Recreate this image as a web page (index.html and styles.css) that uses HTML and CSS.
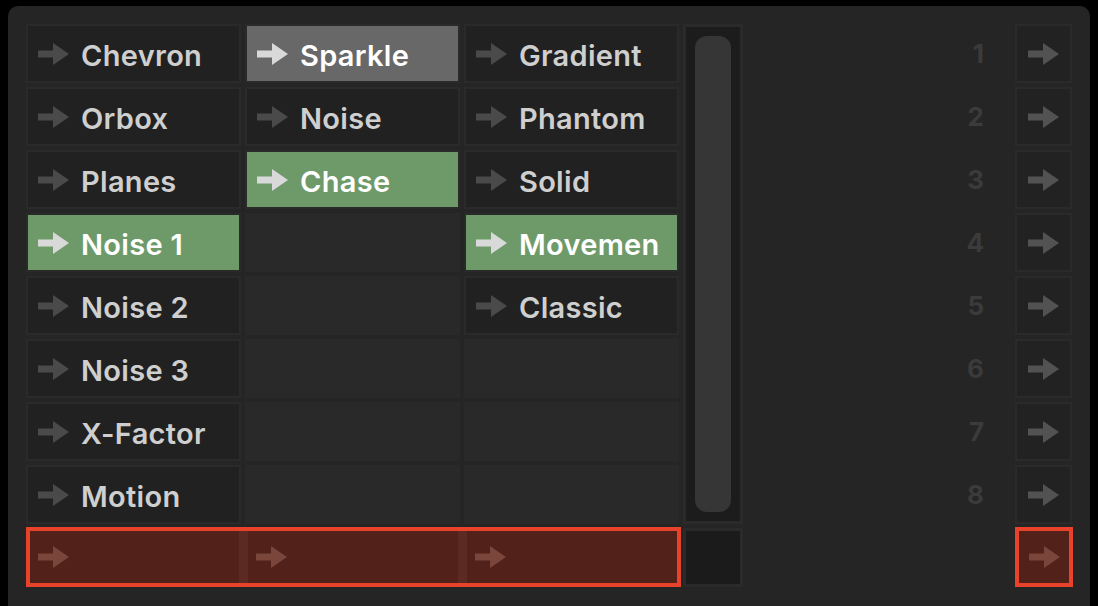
FILE: index.html
```html
<!DOCTYPE html>
<html lang="en">

<head>
  <meta charset="UTF-8">
  <meta name="viewport" content="width=device-width, initial-scale=1.0">
  <title>Clip Launcher</title>
  <link rel="stylesheet" href="styles.css">
</head>

<body>
  <svg width="0" height="0" style="position:absolute">
    <symbol id="arrow" viewBox="0 0 31 22">
      <path d="M0 7.5h15V0l16 11-16 11v-7.5H0z" fill="currentColor" />
    </symbol>
  </svg>

  <div class="panel">
    <div class="launcher">
      <!-- scroll track sits in column 4 over the first 8 rows -->
      <div class="scroll"><div class="thumb"></div></div>

      <!-- row 1 -->
      <div class="cell"><svg class="arrow"><use href="#arrow" /></svg><span>Chevron</span></div>
      <div class="cell playing"><svg class="arrow"><use href="#arrow" /></svg><span>Sparkle</span></div>
      <div class="cell"><svg class="arrow"><use href="#arrow" /></svg><span>Gradient</span></div>
      <div class="num">1</div>
      <div class="go"><svg class="arrow"><use href="#arrow" /></svg></div>

      <!-- row 2 -->
      <div class="cell"><svg class="arrow"><use href="#arrow" /></svg><span>Orbox</span></div>
      <div class="cell"><svg class="arrow"><use href="#arrow" /></svg><span>Noise</span></div>
      <div class="cell"><svg class="arrow"><use href="#arrow" /></svg><span>Phantom</span></div>
      <div class="num">2</div>
      <div class="go"><svg class="arrow"><use href="#arrow" /></svg></div>

      <!-- row 3 -->
      <div class="cell"><svg class="arrow"><use href="#arrow" /></svg><span>Planes</span></div>
      <div class="cell active"><svg class="arrow"><use href="#arrow" /></svg><span>Chase</span></div>
      <div class="cell"><svg class="arrow"><use href="#arrow" /></svg><span>Solid</span></div>
      <div class="num">3</div>
      <div class="go"><svg class="arrow"><use href="#arrow" /></svg></div>

      <!-- row 4 -->
      <div class="cell active"><svg class="arrow"><use href="#arrow" /></svg><span>Noise 1</span></div>
      <div class="empty"></div>
      <div class="cell active"><svg class="arrow"><use href="#arrow" /></svg><span>Movemen</span></div>
      <div class="num">4</div>
      <div class="go"><svg class="arrow"><use href="#arrow" /></svg></div>

      <!-- row 5 -->
      <div class="cell"><svg class="arrow"><use href="#arrow" /></svg><span>Noise 2</span></div>
      <div class="empty"></div>
      <div class="cell"><svg class="arrow"><use href="#arrow" /></svg><span>Classic</span></div>
      <div class="num">5</div>
      <div class="go"><svg class="arrow"><use href="#arrow" /></svg></div>

      <!-- row 6 -->
      <div class="cell"><svg class="arrow"><use href="#arrow" /></svg><span>Noise 3</span></div>
      <div class="empty"></div>
      <div class="empty"></div>
      <div class="num">6</div>
      <div class="go"><svg class="arrow"><use href="#arrow" /></svg></div>

      <!-- row 7 -->
      <div class="cell"><svg class="arrow"><use href="#arrow" /></svg><span>X-Factor</span></div>
      <div class="empty"></div>
      <div class="empty"></div>
      <div class="num">7</div>
      <div class="go"><svg class="arrow"><use href="#arrow" /></svg></div>

      <!-- row 8 -->
      <div class="cell"><svg class="arrow"><use href="#arrow" /></svg><span>Motion</span></div>
      <div class="empty"></div>
      <div class="empty"></div>
      <div class="num">8</div>
      <div class="go"><svg class="arrow"><use href="#arrow" /></svg></div>

      <!-- row 9: queued scene -->
      <div class="queued">
        <div class="q-cell"><svg class="arrow"><use href="#arrow" /></svg></div>
        <div class="q-cell"><svg class="arrow"><use href="#arrow" /></svg></div>
        <div class="q-cell"><svg class="arrow"><use href="#arrow" /></svg></div>
      </div>
      <div class="corner"></div>
      <div class="num"></div>
      <div class="go queued-go"><svg class="arrow"><use href="#arrow" /></svg></div>
    </div>
  </div>
</body>

</html>
```

FILE: styles.css
```css
body {
  margin: 0;
  background-color: #000000;
  font-family: Inter, "Noto Sans", sans-serif;
  overflow: hidden;
}

.panel {
  margin: 6px 8px 0 8px;
  height: 620px;
  box-sizing: border-box;
  padding: 18px;
  background-color: #252525;
  border-radius: 10px;
}

.launcher {
  display: grid;
  grid-template-columns: 215px 215px 215px 60px 1fr 57px;
  grid-auto-rows: 59px;
  gap: 4px;
}

.arrow {
  width: 31px;
  height: 22px;
  flex: none;
  color: #4a4a4a;
}

.cell {
  display: flex;
  align-items: center;
  gap: 12px;
  padding-left: 10px;
  overflow: hidden;
  white-space: nowrap;
  background-color: #212121;
  border: 2px solid #2a2a2a;
  color: #cfcfcf;
  font-size: 29px;
  font-weight: 600;
  letter-spacing: 0.3px;
}

.cell span {
  padding-top: 4px;
}

.cell.playing {
  background-color: #686868;
  color: #ffffff;
}

.cell.active {
  background-color: #6e9a6a;
  color: #ffffff;
}

.cell.playing .arrow,
.cell.active .arrow {
  color: #d9d9d9;
}

.empty {
  background-color: #292929;
}

.scroll {
  grid-column: 4;
  grid-row: 1 / span 8;
  background-color: #1c1c1c;
  border: 3px solid #2a2a2a;
  padding: 9px;
}

.thumb {
  height: 100%;
  background-color: #363636;
  border-radius: 12px;
}

.num {
  display: flex;
  align-items: center;
  justify-content: flex-end;
  padding-right: 27px;
  color: #3b3b3b;
  font-size: 26px;
  font-weight: 700;
}

.go {
  display: flex;
  align-items: center;
  justify-content: center;
  background-color: #222222;
  border: 2px solid #2a2a2a;
}

.go .arrow {
  color: #525252;
}

.queued {
  grid-column: 1 / span 3;
  display: grid;
  grid-template-columns: 209px 210px 1fr;
  gap: 9px;
  margin: -1px -2px 0 0;
  border: 4px solid #e8432a;
  background-color: #5d2a22;
}

.q-cell {
  display: flex;
  align-items: center;
  padding-left: 8px;
  background-color: #52211a;
}

.q-cell .arrow,
.queued-go .arrow {
  color: #7a463b;
}

.corner {
  background-color: #1b1b1b;
  border: 3px solid #2a2a2a;
}

.go.queued-go {
  margin: -1px -1px 0 0;
  border: 4px solid #e8432a;
  background-color: #52211a;
}
```
